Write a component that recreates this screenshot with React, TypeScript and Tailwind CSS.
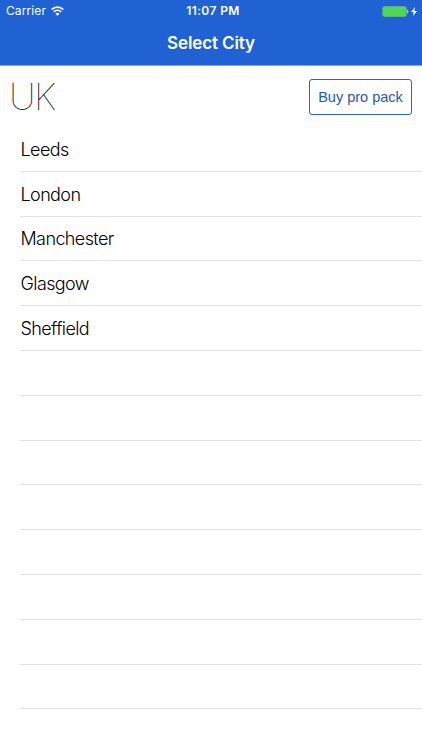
const cities = ["Leeds", "London", "Manchester", "Glasgow", "Sheffield"];
const rows = [...cities, ...Array(8).fill("")];

function StatusBar() {
  return (
    <div className="grid h-[22px] grid-cols-3 items-center pl-[6px] pr-[5px] text-[12px]">
      <div className="flex items-center gap-[5px]">
        <span className="tracking-[0.1px]">Carrier</span>
        <svg width="13" height="10" viewBox="0 0 13 10" fill="none" stroke="currentColor" strokeWidth="1.7">
          <path d="M0.7 3.6a8.2 8.2 0 0 1 11.6 0" />
          <path d="M2.8 5.8a5.2 5.2 0 0 1 7.4 0" />
          <path d="M6.5 9.7 4.5 7.7a2.8 2.8 0 0 1 4 0Z" fill="currentColor" stroke="none" />
        </svg>
      </div>
      <span className="pl-[3px] text-center font-semibold tracking-[0.4px]">11:07 PM</span>
      <div className="flex items-center justify-end gap-[2px]">
        <svg width="27" height="11" viewBox="0 0 27 11">
          <rect x="0.7" y="0.5" width="23.6" height="10" rx="1.8" fill="#4cd94f" stroke="#5fae9b" strokeWidth="0.8" />
          <path d="M25.2 3.5v4c1.6-.6 1.6-3.4 0-4Z" fill="#c9e2ff" />
        </svg>
        <svg width="6" height="9" viewBox="0 0 6 9" fill="currentColor">
          <path d="M4 0 0 5h2.5L2 9l4-5H3.4Z" />
        </svg>
      </div>
    </div>
  );
}

export default function App() {
  return (
    <div className="h-[750px] w-[422px] overflow-hidden bg-white font-['Inter',sans-serif] text-black">
      <header className="h-[66px] border-b border-[#79a2e8] bg-[#2062d4] text-white">
        <StatusBar />
        <h1 className="text-center text-[17px] font-semibold leading-[43px] tracking-[-0.1px]">Select City</h1>
      </header>

      <div className="flex h-[61px] items-center justify-between pl-[9px] pr-[10px]">
        <h2 className="text-[37px] font-thin leading-none tracking-[-1.6px] opacity-[0.99]">UK</h2>
        <button className="h-[36px] w-[103px] rounded-[3px] border border-[#2b62cf] pt-[2px] font-['Liberation_Sans',sans-serif] text-[14.5px] text-[#2456c4]">
          Buy pro pack
        </button>
      </div>

      <ul className="pl-[20px]">
        {rows.map((city, i) => (
          <li
            key={i}
            className="flex h-[44.8px] items-center border-b border-[#e2e2e4] pl-[0.5px] pt-px text-[18px] font-light tracking-[-0.6px]"
          >
            {city}
          </li>
        ))}
      </ul>
    </div>
  );
}
